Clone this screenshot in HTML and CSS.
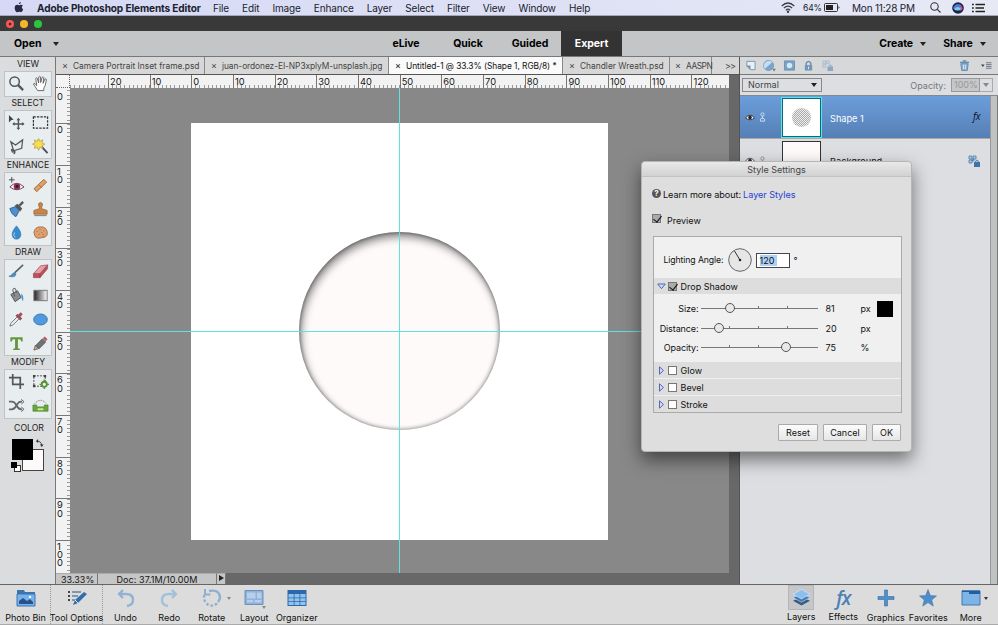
FILE: index.html
```
<!DOCTYPE html>
<html lang="en">
<head>
<meta charset="utf-8">
<meta name="viewport" content="width=device-width, initial-scale=1">
<title>Adobe Photoshop Elements Editor</title>
<link rel="stylesheet" href="styles.css">
</head>
<body>

<header class="menubar">
  <svg class="apple" viewBox="0 0 14 16"><path d="M9.700 0c.1 1.600-1.200 3-2.800 3C6.700 1.500 8.100.2 9.700 0zM12.600 5.200c-2.200 1.400-1.800 4.400.5 5.400-.7 1.900-1.900 4.300-3.400 4.300-1 0-1.400-.6-2.600-.6s-1.700.6-2.600.6C2.700 14.900.7 11.500.7 8.600c0-2.900 1.800-4.500 3.600-4.500 1.100 0 2 .7 2.700.7s1.800-.8 3.100-.8c1 0 1.900.5 2.500 1.200z"/></svg>
  <b>Adobe Photoshop Elements Editor</b>
  <nav>
    <span>File</span><span>Edit</span><span>Image</span><span>Enhance</span><span>Layer</span><span>Select</span><span>Filter</span><span>View</span><span>Window</span><span>Help</span>
  </nav>
  <div class="menu-status">
    <svg class="wifi" viewBox="0 0 14 11" fill="none" stroke="#39394a" stroke-width="1.2"><path d="M.7 4Q7-2 13.300 4M2.800 6.200Q7 2 11.200 6.200M4.800 8.300Q7 6 9.200 8.300"/><circle cx="7" cy="9.7" r=".6"/></svg>
    <span class="percent">64%</span>
    <svg class="battery" viewBox="0 0 16 9"><rect x=".5" y=".5" width="13" height="8" rx="1" fill="none" stroke="#333"/><path d="M2 2h7v5H2z" fill="#222"/><path d="M14.500 3v3l1.200-1.500z" fill="#333"/></svg>
    <span class="clock">Mon 11:28 PM</span>
    <svg class="search" viewBox="0 0 11 11" fill="none" stroke="#333" stroke-width="1.1"><circle cx="4.5" cy="4.5" r="3.7"/><path d="M7.300 7.300l3.200 3.200"/></svg>
    <svg class="siri" viewBox="0 0 12 12"><circle cx="6" cy="6" r="5.8" fill="#1d2146"/><path d="M1 6q3-6 8-3 3 4-2 5Q3 9 1 6z" fill="#5577d8"/><path d="M5 7q2-4 6-1-2 5-6 1z" fill="#d04c8c"/><path d="M2 7q4-4 7 0-4 3-7 0z" fill="#70d4e4"/></svg>
    <svg class="list" viewBox="0 0 13 10" stroke="#222" stroke-width="1.3"><path d="M0 1.500h1.800M3.500 1.500h9.500M0 5h1.800M3.500 5h8.500M0 8.500h1.800M3.500 8.500h9.500"/></svg>
  </div>
</header>

<div class="titlebar"><i class="red"></i><i class="yellow"></i><i class="green"></i></div>

<div class="modebar">
  <div class="open">Open <i class="caret"></i></div>
  <div class="modes"><span>eLive</span><span>Quick</span><span>Guided</span><span class="active">Expert</span></div>
  <div class="share"><span>Create <i class="caret"></i></span><span>Share <i class="caret"></i></span></div>
</div>

<main>
  <aside class="tools">
    <h2>VIEW</h2>
    <div class="group">
      <svg viewBox="0 0 18 18" fill="none" stroke="#555"><circle cx="7" cy="7" r="5" stroke-width="1.6" fill="#e4eef2"/><path d="M10.500 10.500l5.500 5.500" stroke-width="2.4"/></svg>
      <svg viewBox="0 0 18 18"><path d="M6 16.500L1.500 9.500q.5-1.300 2-.2l1.500 2L4 3.500q1-1.200 1.700 0L7 8.500 7.200 2q1-1.300 1.800 0l.2 6L10.800 2.400q1.200-1 1.700.3L11.700 8.800l2-4.600q1.300-.6 1.600.7L14 11l-1.500 3v2.500z" fill="#fff" stroke="#555" stroke-width=".9"/></svg>
    </div>
    <h2>SELECT</h2>
    <div class="group">
      <svg viewBox="0 0 18 18"><path d="M1 1l5 5-2.500.3L1 9z" fill="#444"/><path d="M11 5v11M5.500 10.500h11" stroke="#555" stroke-width="1.5"/><path d="M9 6.500l2-2.500 2 2.500zM9 14.500l2 2.500 2-2.500zM7 8.500l-2.500 2 2.500 2zM15 8.500l2.500 2-2.500 2z" fill="#555"/></svg>
      <svg viewBox="0 0 18 18"><rect x="1.5" y="3" width="15" height="12" fill="none" stroke="#333" stroke-width="1.3" stroke-dasharray="2.5 1.2"/></svg>
      <svg viewBox="0 0 18 18" fill="none" stroke="#555" stroke-width="1.3"><path d="M3 4l5 3.500L15.500 2l-1 9L6 13.500zM6 13.500q-3-3-2 0t3 0q1 2-1 3.500"/></svg>
      <svg viewBox="0 0 18 18"><path d="M10 9l6.500 7" stroke="#4c5068" stroke-width="2"/><path d="M7 .5l1.300 3L11.500 2l-1 3 3 1.500-3 1.500 1 3-3.200-1.300L7 13l-1.500-3.300L2.500 11l1-3-3-1.500 3-1.500-1-3 3 1.500z" fill="#f7df53" stroke="#ae9331" stroke-width=".7"/></svg>
    </div>
    <h2>ENHANCE</h2>
    <div class="group">
      <svg viewBox="0 0 18 18"><path d="M4 0v6M1 3h6" stroke="#444"/><path d="M2 10.500Q9 3 17 10.500 9 16.500 2 10.500z" fill="#fff" stroke="#6b3550"/><circle cx="9.5" cy="10" r="3.5" fill="#8e3154"/><circle cx="9.5" cy="10" r="1.4" fill="#222"/></svg>
      <svg viewBox="0 0 18 18"><path d="M2 12.500L12.500 2.500l3 3L5 15.500z" fill="#dea064" stroke="#a66d3d"/><path d="M7 8l3.500 3.500" stroke="#ad703e"/></svg>
      <svg viewBox="0 0 18 18"><path d="M2 8l6-2 4 4-3.500 6.500Q4 15 2 8z" fill="#4d8fd2" stroke="#2d5e94"/><path d="M7 5l3-2 5 5-2 3z" fill="#555"/><path d="M12 5l4-4" stroke="#555" stroke-width="2.5"/></svg>
      <svg viewBox="0 0 18 18"><path d="M8 8L6.800 3q2.200-3 4.400 0L10 8l6 2v4H2v-4z" fill="#c98546" stroke="#925b2d" stroke-width=".7"/><path d="M2.500 15.500h13" stroke="#777"/></svg>
      <svg viewBox="0 0 18 18"><path d="M9 2q5 6 4.500 9.500Q13 16 9 16t-4.500-4.500Q4 8 9 2z" fill="#378ccf" stroke="#286ca6" stroke-width=".7"/><path d="M7 9q-2 4 1 5" stroke="#a9d7f5" fill="none"/></svg>
      <svg viewBox="0 0 18 18"><path d="M2 9q1-6 7-6t7 5-3 6-7 1-4-6z" fill="#dea071" stroke="#a87047"/><path d="M5 8h1M8 6h1M12 7h1M7 11h1M11 11h1M10 9h1M12 13h1" stroke="#9e6340"/></svg>
    </div>
    <h2>DRAW</h2>
    <div class="group">
      <svg viewBox="0 0 18 18"><path d="M7 10.500L16 2" stroke="#5c6268" stroke-width="1.7"/><path d="M1 14q3 0 3.500-2.500Q7 9 8.500 12 7.500 16 1 14z" fill="#4a90d0" stroke="#386996" stroke-width=".6"/></svg>
      <svg viewBox="0 0 18 18"><path d="M1.500 11.500L9 3l7.500-1-8 9.500z" fill="#e5a0a7" stroke="#93484f" stroke-width=".7"/><path d="M1.500 11.500h7v4h-7zM8.500 11.500l8-9.500v4l-8 9.500z" fill="#c34f5c" stroke="#93484f" stroke-width=".7"/></svg>
      <svg viewBox="0 0 18 18"><path d="M3 8l7-4 4 7-6.500 4.500z" fill="#8a8e91" stroke="#505456"/><path d="M7 10L5 3q1-3 3-1l1 4" fill="none" stroke="#555"/><path d="M14 7q3 2 2 8-2-1-2-8z" fill="#4b98d8"/></svg>
      <svg viewBox="0 0 18 18"><defs><linearGradient id="fade"><stop stop-color="#222"/><stop offset="1" stop-color="#fff"/></linearGradient></defs><rect x="2" y="3.500" width="14" height="11" fill="url(#fade)" stroke="#777"/></svg>
      <svg viewBox="0 0 18 18"><path d="M2 16l1-3 7-7 2 2-7 7z" fill="#eee" stroke="#555" stroke-width=".8"/><path d="M9 4l5 5M11 6l3.500-3.500" stroke="#984e59" stroke-width="3"/></svg>
      <svg viewBox="0 0 18 18"><ellipse cx="9" cy="9" rx="7.2" ry="5.8" fill="#509be0" stroke="#3972aa"/></svg>
      <svg viewBox="0 0 18 18"><path d="M2.500 2.500h13V7H14q-.4-2.500-2-2.500h-1.500V14l2 .5V16h-7v-1.500l2-.5V4.500H6Q4.300 4.500 4 7H2.500z" fill="#64963d"/></svg>
      <svg viewBox="0 0 18 18"><path d="M2 16l1.500-5 3.500 3.500z" fill="#dba77a" stroke="#444" stroke-width=".7"/><path d="M4 11l7-7 3.500 3.500-7 7z" fill="#707276" stroke="#444" stroke-width=".7"/><path d="M11.500 3.500l2-2 3 3-2 2z" fill="#b95a62"/></svg>
    </div>
    <h2>MODIFY</h2>
    <div class="group">
      <svg viewBox="0 0 18 18" fill="none" stroke="#555" stroke-width="1.8"><path d="M5 1v11h12M1 5h12v12"/></svg>
      <svg viewBox="0 0 18 18"><path d="M2 3h12v11H2z" fill="none" stroke="#444" stroke-dasharray="2 1.3"/><path d="M1 2h2.500v2.500H1zM12.500 2H15v2.500h-2.500zM1 12.500h2.500V15H1z" fill="#444"/><circle cx="13" cy="12" r="2.7" fill="#eee" stroke="#589333" stroke-width="2"/><path d="M13 7v2m0 6v2M8 12h2m6 0h2" stroke="#589333" stroke-width="1.5"/></svg>
      <svg viewBox="0 0 18 18" fill="none" stroke="#666" stroke-width="1.8"><path d="M1 5h3q3 0 5 4t5 4h1M1 13h3q3 0 5-4t5-4h1"/><path d="M14 2.500L17 5l-3 2.500M14 10.500l3 2.500-3 2.500" stroke-width="1"/></svg>
      <svg viewBox="0 0 18 18"><path d="M3 7q6-7 12 0" fill="none" stroke="#7c5a4b" stroke-dasharray="1 1"/><path d="M1 8.500h4v2h8v-2h4V15H1z" fill="#67a83e" stroke="#4a7c2b" stroke-width=".7"/><path d="M6 12h6v2H6z" fill="#d4ea95"/></svg>
    </div>
    <h2 class="color-title">COLOR</h2>
    <div class="colors">
      <i class="back"></i><i class="front"></i><i class="mini-back"></i><i class="mini"></i>
      <svg viewBox="0 0 10 10" fill="none" stroke="#333"><path d="M2 2.500q5-.5 5.500 5"/><path d="M3.500 0L1 2.500l2.500 2zM5.500 6h4l-2 3z" fill="#333" stroke="none"/></svg>
    </div>
  </aside>

  <section class="editor">
    <div class="tabs">
      <span class="tab"><i>×</i>Camera Portrait Inset frame.psd</span>
      <span class="tab"><i>×</i>juan-ordonez-EI-NP3xplyM-unsplash.jpg</span>
      <span class="tab active"><i>×</i>Untitled-1 @ 33.3% (Shape 1, RGB/8) *</span>
      <span class="tab"><i>×</i>Chandler Wreath.psd</span>
      <span class="tab"><i>×</i>AASPN</span>
      <span class="more">&gt;&gt;</span>
    </div>
    <div class="workspace">
      <div class="corner"></div>
      <div class="ruler-h">
        <div class="marks"><span></span><span>20</span><span>10</span><span>0</span><span>10</span><span>20</span><span>30</span><span>40</span><span>50</span><span>60</span><span>70</span><span>80</span><span>90</span><span>100</span><span>110</span><span>120</span></div>
      </div>
      <div class="ruler-v">
        <div class="marks"><span>&nbsp;<br>0</span><span>0</span><span>10</span><span>20</span><span>30</span><span>40</span><span>50</span><span>60</span><span>70</span><span>80</span><span>90</span><span>100</span></div>
      </div>
      <div class="canvas">
        <div class="paper"><div class="circle"></div></div>
        <i class="guide-h"></i><i class="guide-v"></i>
      </div>
    </div>
    <div class="status">
      <span class="zoom">33.33%</span><span class="doc">Doc: 37.1M/10.00M</span><span class="arrow"><i></i></span>
    </div>
  </section>

  <aside class="panel">
    <div class="panel-icons">
      <svg viewBox="0 0 12 12"><path d="M2 1.500h9v9H6l-4-4z" fill="#e8f0f7" stroke="#7793ad"/><path d="M1 6h5v5z" fill="#7893ac"/></svg>
      <svg viewBox="0 0 14 12"><circle cx="6" cy="6" r="5.5" fill="#7ba5cd" stroke="#6689aa" stroke-width=".7"/><path d="M2 9.500L10 2.500Q6-1 2 3-.5 6.500 2 9.500z" fill="#c5ddf1"/><path d="M10 9.500h4l-2 3z" fill="#777"/></svg>
      <svg viewBox="0 0 12 12"><path d="M.5 1h11v10H.5z" fill="#79a2c9" stroke="#6e90af"/><circle cx="6" cy="6" r="3" fill="#d7e7f4"/></svg>
      <svg viewBox="0 0 12 12"><path d="M3.500 6V3.500q2.500-4 5 0V6" fill="none" stroke="#6d8daa" stroke-width="1.5"/><path d="M2 5.500h8v6H2z" fill="#7297ba"/><path d="M6 7v3" stroke="#dfebf5"/></svg>
      <svg viewBox="0 0 12 12"><path d="M1 1h3v3H1zM5 1h3v3H5zM1 5h3v3H1z" fill="none" stroke="#9bb5cc" stroke-width=".8"/><path d="M6 7h6v5H6z" fill="#8ba8c4"/><path d="M7.500 7q1.500-4 3 0" fill="none" stroke="#8ba8c4"/></svg>
      <svg class="trash" viewBox="0 0 12 12"><path d="M1 2.500h10M4 1h4" stroke="#668bad" stroke-width="1.3"/><path d="M2 4h8l-1 7.500H3z" fill="#8aaed0" stroke="#668bad"/><path d="M5 5v5M7 5v5" stroke="#dbeaf5"/></svg>
      <svg viewBox="0 0 12 12"><path d="M0 5h4L2 7.500z" fill="#444"/><path d="M5.500 3h6M5.500 5h6M5.500 7h6M5.500 9h6" stroke="#626e80"/></svg>
    </div>
    <div class="blend">
      <div class="select">Normal <i class="caret"></i></div>
      <div class="opacity">Opacity: <span>100%</span><b><i class="caret"></i></b></div>
    </div>
    <div class="layers">
      <div class="layer-list">
        <div class="layer selected">
          <svg class="eye" viewBox="0 0 12 10"><path d="M.7 5.500Q6-1 11.300 5.500 6 10 .7 5.500z" fill="#fff" stroke="#222"/><circle cx="6" cy="5" r="2.2" fill="#222"/></svg>
          <svg class="link" viewBox="0 0 8 12" fill="none" stroke="#dce9f6"><circle cx="4" cy="3" r="2"/><path d="M4 5v3M1.500 11V8.500q2.500-3 5 0V11z"/></svg>
          <div class="thumb"><i></i></div>
          <span class="name">Shape 1</span>
          <em>fx</em>
        </div>
        <div class="layer">
          <svg class="eye" viewBox="0 0 12 10"><path d="M.7 5.500Q6-1 11.300 5.500 6 10 .7 5.500z" fill="#fff" stroke="#333"/><circle cx="6" cy="5" r="2.2" fill="#333"/></svg>
          <svg class="link" viewBox="0 0 8 12" fill="none" stroke="#888"><circle cx="4" cy="3" r="2"/><path d="M4 5v3M1.500 11V8.500q2.500-3 5 0V11z"/></svg>
          <div class="thumb"></div>
          <span class="name">Background</span>
          <svg class="lock" viewBox="0 0 12 12"><path d="M1 1h3v3H1zM5 1h3v3H5zM1 5h3v3H1zM4 4h2v2H4z" fill="#a9c9e5" stroke="#4f7ba6" stroke-width=".8"/><path d="M6 7h6v5H6z" fill="#3e74a8"/><path d="M7.500 7q1.500-4 3 0" fill="none" stroke="#3e74a8"/></svg>
        </div>
      </div>
      <div class="scroll"></div>
    </div>
  </aside>
</main>

<footer>
  <div class="item"><svg viewBox="0 0 20 18"><path d="M1 1h7l1 2h10v14H1z" fill="#3c74b1"/><path d="M1 5h18v12H1z" fill="#78b2e9" stroke="#3c74b1"/><path d="M3 15v-3l4-3 4 3 3-2 3 3v2z" fill="#23548a"/><circle cx="14" cy="8" r="1.2" fill="#fff"/></svg>Photo Bin</div>
  <div class="item dotted"><svg viewBox="0 0 20 18"><path d="M1 3h2M1 7h2M1 11h2" stroke="#444" stroke-width="2"/><path d="M5 3h9M5 7h6M5 11h3" stroke="#6281a0" stroke-width="1.5"/><path d="M6 16l2-5 9-8 3 2-9 9z" fill="#2f6dac"/><path d="M8 11l3 3" stroke="#dce8f5"/></svg>Tool Options</div>
  <div class="item"><svg viewBox="0 0 20 18" fill="none" stroke="#91b2d2" stroke-width="2.4"><path d="M7 1L3 5l4 4M3 5h7q7 0 7 6 0 5-6 6"/></svg>Undo</div>
  <div class="item"><svg viewBox="0 0 20 18" fill="none" stroke="#a3bfd9" stroke-width="2.4"><path d="M13 1l4 4-4 4M17 5h-7q-7 0-7 6 0 5 6 6"/></svg>Redo</div>
  <div class="item"><svg viewBox="0 0 20 18" fill="none" stroke="#8fb0cf" stroke-width="2.4"><path d="M7 2q10-2 11 6 0 3-2 5"/><path d="M15 14.500Q9 19 4 14 1 10 2.500 5.500" stroke-dasharray="2.5 2"/><path d="M3 0v5.500h5.500" stroke-width="2"/></svg><i class="caret"></i>Rotate</div>
  <div class="item"><svg viewBox="0 0 20 18"><path d="M1 1.500h18v14H1z" fill="#8fb1da" stroke="#6f91b8"/><path d="M3 3.500h8.500v6H3zM13 3.500h4.500v6H13zM3 11h6v2.500H3zM10.500 11h7v2.500h-7z" fill="#b5cfec"/></svg><i class="caret low"></i>Layout</div>
  <div class="item"><svg viewBox="0 0 20 18"><path d="M.5 1h19v16H.5z" fill="#2c68aa"/><path d="M1.500 5h5.200v3.500H1.500zM7.500 5h5v3.500h-5zM13.300 5h5.200v3.500h-5.200zM1.500 9.300h5.200v3H1.500zM7.500 9.300h5v3h-5zM13.300 9.300h5.200v3h-5.200zM1.500 13h5.200v3H1.500zM7.500 13h5v3h-5zM13.300 13h5.200v3h-5.200z" fill="#91c3ef"/></svg>Organizer</div>
  <div class="right">
    <div class="item"><div class="pressed"><svg viewBox="0 0 20 18"><path d="M1 12.500l9-4 9 4-9 5z" fill="#365b84"/><path d="M1 9l9-4 9 4-9 5z" fill="#4679ae" stroke="#d9e5f1" stroke-width=".6"/><path d="M1 5.500l9-5 9 5-9 5z" fill="#8bbfee" stroke="#e3eefa" stroke-width=".6"/></svg></div>Layers</div>
    <div class="item"><strong>fx</strong>Effects</div>
    <div class="item"><svg viewBox="0 0 20 18"><path d="M8.500 1h3v6.500H18v3h-6.500V17h-3v-6.500H2v-3h6.500z" fill="#4f8fcb" stroke="#386f9f" stroke-width=".6"/></svg>Graphics</div>
    <div class="item"><svg viewBox="0 0 20 18"><path d="M10 .5l2.300 6 6.200.4-4.800 4 1.600 6.200L10 13.600l-5.300 3.500 1.600-6.200-4.800-4 6.200-.4z" fill="#4c8dcb" stroke="#386b9c" stroke-width=".5"/></svg>Favorites</div>
    <div class="item"><svg viewBox="0 0 20 18"><path d="M1 2h18v14H1z" fill="#7db4e8" stroke="#4979aa"/><path d="M1 1.500h18V5H8V3H1z" fill="#225d9d"/></svg><i class="caret dark"></i>More</div>
  </div>
</footer>

<div class="dialog">
  <div class="dialog-title">Style Settings</div>
  <div class="learn"><i>?</i>Learn more about: <a href="#">Layer Styles</a></div>
  <div class="preview"><i class="check on"></i>Preview</div>
  <div class="settings">
    <div class="angle"><label>Lighting Angle:</label>
      <svg viewBox="0 0 24 24"><circle cx="12" cy="12" r="11.3" fill="#e6e6e6" stroke="#666"/><path d="M12 12L6.500 3" stroke="#333"/><circle cx="12" cy="12" r="1.3" fill="#222"/></svg>
      <div class="input"><span>120</span></div>°
    </div>
    <div class="section"><svg class="tri" viewBox="0 0 9 9"><path d="M.7 2h7.600L4.500 6.700z"/></svg><i class="check on"></i>Drop Shadow</div>
    <div class="sliders">
      <div class="row"><label>Size:</label><div class="track"><i style="left: 25.5%"></i></div><span>81</span><span>px</span><b class="swatch"></b></div>
      <div class="row"><label>Distance:</label><div class="track"><i style="left: 16%"></i></div><span>20</span><span>px</span></div>
      <div class="row"><label>Opacity:</label><div class="track"><i style="left: 73.5%"></i></div><span>75</span><span>%</span></div>
    </div>
    <div class="section"><svg class="tri" viewBox="0 0 9 9"><path d="M2.500.8v7.400L6.500 4.500z"/></svg><i class="check"></i>Glow</div>
    <div class="section"><svg class="tri" viewBox="0 0 9 9"><path d="M2.500.8v7.400L6.500 4.500z"/></svg><i class="check"></i>Bevel</div>
    <div class="section"><svg class="tri" viewBox="0 0 9 9"><path d="M2.500.8v7.400L6.500 4.500z"/></svg><i class="check"></i>Stroke</div>
  </div>
  <div class="buttons"><button class="reset">Reset</button><button class="cancel">Cancel</button><button class="ok">OK</button></div>
</div>

</body>
</html>
```
FILE: styles.css
```
* { box-sizing: border-box; }

body {
  margin: 0;
  width: 998px;
  height: 625px;
  overflow: hidden;
  display: flex;
  flex-direction: column;
  position: relative;
  background: #dcdcdd;
  color: #151515;
  font-family: Inter, "Liberation Sans", sans-serif;
  font-size: 9px;
}

svg { display: block; flex: none; overflow: visible; }
i { font-style: normal; }

.caret {
  display: inline-block;
  border: 3px solid transparent;
  border-top: 4px solid #222;
  border-bottom: 0;
}

/* Menu bar */
.menubar {
  height: 16px;
  flex: none;
  display: flex;
  align-items: center;
  background: linear-gradient(90deg, #d5d9f5, #dfe2f5 60%, #e7e9f5);
  border-bottom: 1px solid #a5a7b6;
  color: #20222e;
  font-size: 10px;
  white-space: nowrap;
}
.apple { width: 10px; height: 11px; margin: 0 13px 1px 14px; fill: #2b2a45; }
.menubar > b { width: 162px; font-size: 10.1px; letter-spacing: -.12px; }
.menubar nav { display: flex; gap: 13.1px; margin-left: 14px; letter-spacing: -.15px; }
.menu-status { margin-left: auto; display: flex; align-items: center; }
.wifi { width: 14px; height: 11px; margin-right: 8px; }
.percent { font-size: 8.5px; width: 21px; letter-spacing: -.1px; }
.battery { width: 16px; height: 9px; margin-right: 12px; }
.clock { width: 64px; letter-spacing: -.2px; }
.search { width: 11px; height: 11px; margin: 0 11px 0 14px; }
.siri { width: 12px; height: 12px; margin-right: 8px; }
.list { width: 13px; height: 10px; margin-right: 13px; }

.titlebar {
  height: 15px;
  flex: none;
  background: #393939;
  display: flex;
  align-items: center;
  gap: 6px;
  padding: 1px 0 0 6px;
}
.titlebar i { width: 8px; height: 8px; border-radius: 50%; background: #f7b52c; }
.titlebar .red { background: radial-gradient(#711 20%, #f25b55 30%); }
.titlebar .green { background: #29c73d; }

/* Mode switcher */
.modebar {
  height: 26px;
  flex: none;
  display: flex;
  background: #c4c5c7;
  border-bottom: 1px solid #77787a;
  font-size: 10.5px;
  font-weight: 700;
  color: #000;
  line-height: 25px;
}
.modebar .caret { margin-bottom: 1px; }
.open { width: 375px; padding-left: 14px; }
.open .caret { margin-left: 9px; }
.modes { display: flex; letter-spacing: -.05px; }
.modes span { text-align: center; width: 62px; }
.modes .active { background: #333; color: #fff; width: 61px; }
.share { margin-left: auto; display: flex; gap: 17px; padding-right: 12px; letter-spacing: -.1px; }
.share .caret { margin-left: 5px; }

main { flex: 1; min-height: 0; display: flex; }

/* Toolbox */
.tools {
  width: 56px;
  flex: none;
  background: #dadcde;
  border-right: 1px solid #777;
  padding: 0 3px 0 4px;
}
.tools h2 {
  margin: 0;
  height: 13px;
  line-height: 13px;
  font-size: 8.7px;
  font-weight: 400;
  text-align: center;
  color: #222;
}
.tools h2:first-child { height: 14px; line-height: 14px; }
.tools .color-title { line-height: 18px; height: 20px; padding-left: 2px; }
.group {
  display: grid;
  grid-template-columns: 23px 24px;
  grid-auto-rows: 23.8px;
  place-items: center;
  background: #e8edef;
  border: 1px solid #bfc3c6;
}
.group svg { width: 17px; height: 17px; }
.colors { position: relative; height: 36px; }
.colors i, .colors svg { position: absolute; }
.front { left: 8px; top: 0; width: 21px; height: 21px; background: #000; }
.back { left: 18px; top: 10px; width: 22px; height: 22px; background: #fffafa; border: 1px solid #444; }
.mini { left: 7px; top: 23px; width: 6px; height: 6px; background: #000; }
.mini-back { left: 10px; top: 26px; width: 7px; height: 7px; background: #fff; border: 1px solid #333; }
.colors svg { left: 31px; top: 0; width: 9px; height: 9px; }

/* Document area */
.editor { width: 684px; flex: none; display: flex; flex-direction: column; background: #686868; border-right: 1px solid #555; }
.tabs {
  height: 18px;
  flex: none;
  display: flex;
  background: #d7d7d8;
  border-bottom: 1px solid #555;
  line-height: 17px;
  font-size: 8.4px;
  white-space: nowrap;
  color: #444;
}
.tab { border-right: 1px solid #888; width: 149px; padding-left: 6px; flex: none; }
.tab i { display: inline-block; width: 11px; font-size: 9px; }
.tab:nth-child(2) { width: 184px; letter-spacing: -.07px; }
.tab.active { width: 174px; background: #fafafa; color: #111; letter-spacing: -.05px; }
.tab:nth-child(4) { width: 107px; }
.tab:nth-child(5) { width: 42px; padding-left: 5px; letter-spacing: -.5px; }
.more { width: 27px; text-align: right; padding-right: 4px; font-size: 9px; letter-spacing: -1px; }

.workspace {
  flex: 1;
  min-height: 0;
  width: 673px;
  display: grid;
  grid-template: 13px 1fr / 14px 1fr;
}
.corner { background: #f4f4f4; border-right: 1px dotted #666; border-bottom: 1px dotted #666; }
.ruler-h { overflow: hidden; background: #f2f2f2; }
.ruler-h .marks {
  display: flex;
  height: 13px;
  width: 680px;
  margin-left: -3.7px;
  background: repeating-linear-gradient(90deg, #999 0 1px, transparent 1px 4.168px) 0 10px / 100% 3px no-repeat;
}
.ruler-h span {
  width: 41.68px;
  flex: none;
  border-left: 1px solid #777;
  padding-left: 1px;
  font-size: 9.3px;
  line-height: 14px;
}
.ruler-v { overflow: hidden; background: #f2f2f2; }
.ruler-v .marks {
  margin-top: -6.5px;
  height: 500px;
  background: repeating-linear-gradient(#999 0 1px, transparent 1px 4.168px) 11px 0 / 3px 100% no-repeat;
}
.ruler-v span {
  display: block;
  height: 41.68px;
  border-top: 1px solid #777;
  padding: 2px 6px 0 1px;
  line-height: 8.3px;
  font-size: 9.3px;
  word-break: break-all;
}
.canvas { background: #888; position: relative; overflow: hidden; }
.paper { position: absolute; left: 121px; top: 35px; width: 417px; height: 417px; background: #fff; }
.circle {
  position: absolute;
  left: 108px;
  top: 109px;
  width: 201px;
  height: 198px;
  border-radius: 50%;
  background: #fefafa;
  box-shadow: inset 2px 5px 9px rgba(0, 0, 0, .46), inset 0 0 4px rgba(0, 0, 0, .5);
}
.guide-h, .guide-v { position: absolute; background: #5fe3e0; }
.guide-h { top: 243px; left: 0; width: 100%; height: 1px; }
.guide-v { left: 329px; top: 0; width: 1px; height: 100%; }

.status { height: 11px; flex: none; display: flex; font-size: 9px; line-height: 12px; overflow: hidden; }
.status span { background: #c6c6c6; border-right: 1px solid #777; border-top: 1px solid #aaa; }
.zoom { width: 42px; padding-left: 5px; }
.doc { width: 119px; text-align: center; letter-spacing: .1px; }
.arrow { width: 9px; padding: 1px 2px; }
.arrow i { display: block; border: 3px solid transparent; border-left: 5px solid #222; border-right: 0; }

/* Layers panel */
.panel { flex: 1; background: #dcdee1; display: flex; flex-direction: column; }
.panel-icons { height: 18px; display: flex; align-items: center; gap: 8px; padding: 0 6px 0 5px; border-bottom: 1px solid #777; background: #d7d8da; }
.panel-icons svg { width: 11px; height: 11px; }
.panel-icons svg:nth-child(2) { width: 13px; }
.panel-icons svg:nth-child(1) { margin-right: -1px; }
.panel-icons .trash { margin-left: auto; margin-right: 3px; }
.blend { height: 21px; flex: none; display: flex; justify-content: space-between; align-items: center; padding: 0 5px 0 2px; border-bottom: 1px solid #888; }
.select {
  width: 80px;
  height: 14px;
  display: flex;
  align-items: center;
  justify-content: space-between;
  border: 1px solid #888;
  padding: 0 4px 0 5px;
  line-height: 10px;
  color: #444;
}
.opacity { display: flex; align-items: center; color: #777; }
.opacity span { border: 1px solid #999; background: #c5c7c9; width: 29px; height: 14px; line-height: 12px; margin-left: 5px; padding-left: 2px; color: #999; }
.opacity b { border: 1px solid #aaa; border-left: 0; width: 13px; height: 14px; display: flex; align-items: center; justify-content: center; }
.opacity .caret { border-top-color: #888; }
.layers { flex: 1; display: flex; }
.layer-list { width: 250px; }
.scroll { flex: 1; background: #c0c1c3; border-left: 1px solid #999; border-right: 1px solid #777; }
.layer { height: 43px; display: flex; align-items: center; padding: 0 10px 0 5px; font-size: 9.2px; }
.layer.selected { height: 43px; background: linear-gradient(#6c9edb, #557fb5); color: #fff; border-bottom: 1px solid #aaa; }
.eye { width: 10px; height: 9px; }
.link { width: 7px; height: 10px; margin: 0 16px 0 4px; }
.thumb { width: 39px; height: 40px; background: #fffafa; border: 1px solid #333; display: grid; place-items: center; }
.selected .thumb { height: 39px; background: #fff; border-color: #076b78; outline: 1px solid #53e7ed; }
.thumb i { width: 19px; height: 19px; border-radius: 50%; background: repeating-conic-gradient(#aaa 0 25%, #eee 0 50%) 0 0 / 2px 2px; }
.name { margin: 2px auto 0 9px; }
.layer em { font: italic 10px "Open Sans", sans-serif; letter-spacing: -.5px; color: #112; margin-top: -3px; }
.lock { width: 12px; height: 12px; }

/* Bottom bar */
footer {
  height: 41px;
  flex: none;
  display: flex;
  background: #dcdcdc;
  border-top: 1px solid #666;
  border-bottom: 1px solid #aaa;
  padding-right: 6px;
  color: #111;
}
.item { position: relative; width: 42.5px; display: flex; flex-direction: column; align-items: center; padding-top: 3px; white-space: nowrap; line-height: 14px; }
.item > svg { width: 20px; height: 20px; margin-bottom: 3px; }
.item:nth-child(1) { width: 50px; padding-left: 1px; }
.item.dotted { width: 53px; border-left: 1px dotted #999; border-right: 1px dotted #999; }
.item:nth-child(3) { width: 45px; }
.item .caret { position: absolute; right: 2px; top: 12px; border-width: 3px 2px 0; border-top-color: #888; }
.item .low { top: 21px; right: 10px; }
.item .dark { border-top-color: #333; right: 4px; }
.right { margin-left: auto; display: flex; }
.right .item:nth-child(n) { width: 42.5px; }
.pressed { width: 26px; height: 26px; display: grid; place-items: center; background: #c5c7ca; border: 1px solid #b5b5b5; margin: -3px 0 0; }
.pressed svg { width: 19px; height: 17px; }
.item strong { font: italic 600 19px/20px "Open Sans", sans-serif; letter-spacing: -1px; color: #4b81b5; height: 23px; }

/* Style settings dialog */
.dialog {
  position: absolute;
  left: 641px;
  top: 161px;
  width: 271px;
  height: 291px;
  background: #dedede;
  border: 1px solid #b5b5b5;
  border-radius: 4px;
  box-shadow: 0 8px 18px rgba(0, 0, 0, .5);
  font-size: 9px;
  color: #111;
}
.dialog-title { height: 15px; line-height: 15px; text-align: center; color: #444; background: linear-gradient(#e8e8e8, #d2d2d2); border-bottom: 1px solid #c2c2c2; border-radius: 4px 4px 0 0; }
.learn { display: flex; align-items: center; height: 13px; margin: 11px 0 0 10px; font-size: 9.1px; letter-spacing: -.04px; }
.learn i { width: 9px; height: 9px; line-height: 9px; border-radius: 50%; background: #555; color: #fff; font-size: 8px; font-weight: 700; text-align: center; margin: -2px 2px 0 0; }
.learn a { color: #2541d4; text-decoration: none; margin-left: 2px; }
.preview { display: flex; align-items: center; height: 14px; margin: 12px 0 0 10px; }
.preview .check { margin: -3px 6px 0 0; }
.check { width: 9px; height: 9px; border: 1px solid #777; background: #fff; flex: none; position: relative; }
.check.on { background: #aaa; }
.check.on::after { content: ""; position: absolute; left: 2px; top: -1px; width: 4px; height: 7px; border: solid #111; border-width: 0 1.5px 1.5px 0; transform: rotate(38deg); }
.settings { width: 249px; height: 177px; margin: 9px 0 0 10.5px; border: 1px solid #aaa; background: #f0f0f0; }
.angle { height: 41px; display: flex; align-items: center; padding: 5px 0 0 10px; white-space: nowrap; }
.angle label { width: 60px; font-size: 8.7px; letter-spacing: -.1px; }
.angle svg { width: 24px; height: 24px; margin: 0 4px; }
.angle .input { width: 34px; height: 15px; border: 1px solid #445; background: #fff; padding: 1px 3px; margin-right: 4px; }
.input span { display: block; width: 17px; line-height: 11px; background: #abcff5; }
.section { height: 16px; display: flex; align-items: center; padding-left: 3px; margin-bottom: 1px; background: #ddd; }
.section:last-child { margin-bottom: 0; }
.section .check { margin: 1px 4px 0 2px; }
.tri { width: 9px; height: 9px; fill: #ccd9fa; stroke: #5267b4; }
.sliders { height: 67px; padding-top: 4px; }
.row { height: 19.5px; display: flex; align-items: center; }
.row label { width: 45px; text-align: right; white-space: nowrap; letter-spacing: -.1px; }
.track {
  position: relative;
  width: 117px;
  height: 9px;
  margin: 0 8px 0 2px;
  background:
    linear-gradient(#777, #777) 0 4px / 100% 1px no-repeat,
    repeating-linear-gradient(90deg, transparent 0 28px, #777 28px 29px) 0 2px / 88px 3px no-repeat;
}
.track i { position: absolute; top: -1px; width: 10px; height: 10px; margin-left: -5px; border: 1px solid #555; border-radius: 50%; background: #e8e8e8; }
.row span { width: 35px; }
.row span + span { width: 16px; }
.swatch { width: 16px; height: 16px; background: #000; }
.buttons { display: flex; justify-content: flex-end; gap: 5px; margin: 11px 10px 0 0; }
.buttons button { height: 17px; padding: 0; border: 1px solid #aaa; border-radius: 1px; background: linear-gradient(#fcfcfc, #e6e6e6); font: inherit; color: #111; }
.reset { width: 40px; }
.cancel { width: 44px; }
.ok { width: 29px; }
```
